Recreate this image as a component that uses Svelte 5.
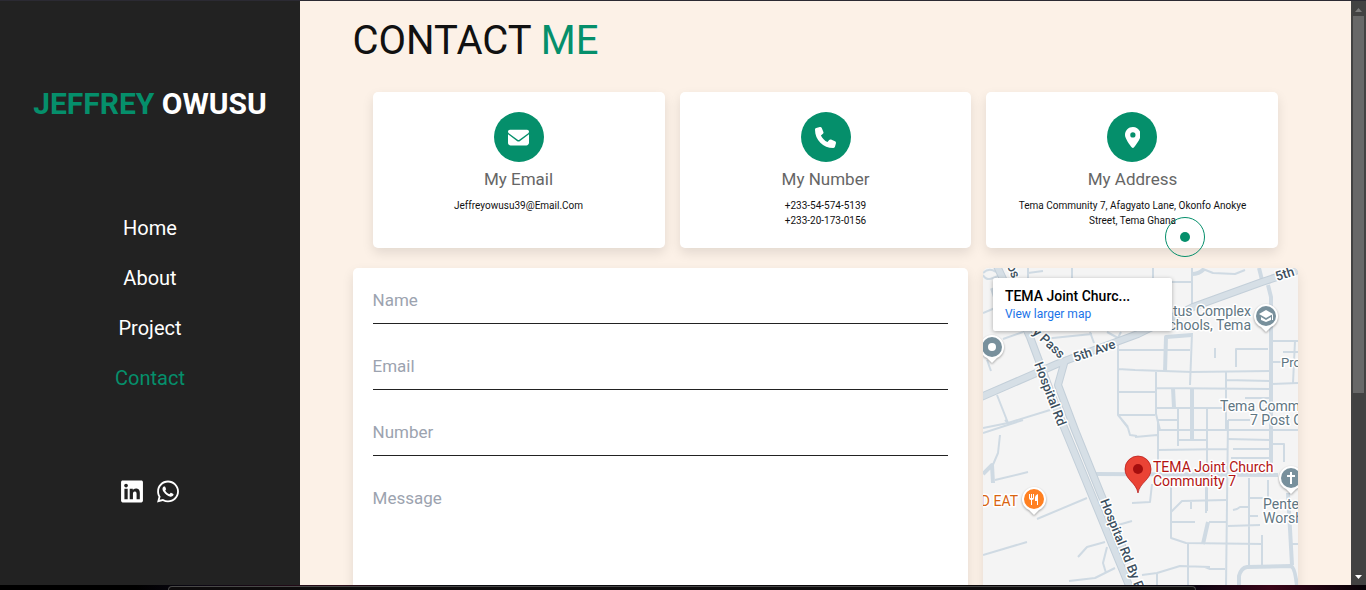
<script lang="ts">
  const links = ["Home", "About", "Project", "Contact"];
  let active = $state("Contact");
  let cursor = $state({ x: 1185, y: 237 });

  const socials = [
    {
      name: "LinkedIn",
      path: "M416 32H31.9C14.3 32 0 46.5 0 64.3v383.4C0 465.5 14.3 480 31.9 480H416c17.6 0 32-14.5 32-32.3V64.3c0-17.8-14.4-32.3-32-32.3zM135.4 416H69V202.2h66.5V416zm-33.2-243c-21.3 0-38.5-17.3-38.5-38.5S80.9 96 102.2 96c21.2 0 38.5 17.3 38.5 38.5 0 21.3-17.2 38.5-38.5 38.5zm282.1 243h-66.4V312c0-24.8-.5-56.7-34.5-56.7-34.6 0-39.9 27-39.9 54.9V416h-66.4V202.2h63.7v29.2h.9c8.9-16.8 30.6-34.5 62.9-34.5 67.2 0 79.7 44.3 79.7 101.9V416z",
    },
    {
      name: "WhatsApp",
      path: "M380.9 97.1C339 55.1 283.2 32 223.9 32c-122.4 0-222 99.6-222 222 0 39.1 10.2 77.3 29.6 111L0 480l117.7-30.9c32.4 17.7 68.9 27 106.1 27h.1c122.3 0 224.1-99.6 224.1-222 0-59.3-25.2-115-67.1-157zm-157 341.6c-33.2 0-65.7-8.9-94-25.7l-6.7-4-69.8 18.3L72 359.2l-4.4-7c-18.5-29.4-28.2-63.3-28.2-98.2 0-101.7 82.8-184.5 184.6-184.5 49.3 0 95.6 19.2 130.4 54.1 34.8 34.9 56.2 81.2 56.1 130.5 0 101.8-84.9 184.6-186.6 184.6zm101.2-138.2c-5.5-2.8-32.8-16.2-37.9-18-5.1-1.9-8.8-2.8-12.5 2.8-3.7 5.6-14.3 18-17.6 21.8-3.2 3.7-6.5 4.2-12 1.4-32.6-16.3-54-29.1-75.5-66-5.7-9.8 5.7-9.1 16.3-30.3 1.8-3.7.9-6.9-.5-9.7-1.4-2.8-12.5-30.1-17.1-41.2-4.5-10.8-9.1-9.3-12.5-9.5-3.2-.2-6.9-.2-10.6-.2-3.7 0-9.7 1.4-14.8 6.9-5.1 5.6-19.4 19-19.4 46.3 0 27.3 19.9 53.7 22.6 57.4 2.8 3.7 39.1 59.7 94.8 83.8 35.2 15.2 49 16.5 66.6 13.9 10.7-1.6 32.8-13.4 37.4-26.4 4.6-13 4.6-24.1 3.2-26.4-1.3-2.5-5-3.9-10.5-6.6z",
    },
  ];

  const cards = [
    {
      title: "My Email",
      lines: ["Jeffreyowusu39@Email.Com"],
      box: "0 0 512 512",
      path: "M48 64C21.5 64 0 85.5 0 112c0 15.1 7.1 29.3 19.2 38.4L236.8 313.6c11.4 8.5 27 8.5 38.4 0L492.8 150.4c12.1-9.1 19.2-23.3 19.2-38.4c0-26.5-21.5-48-48-48H48zM0 176V384c0 35.3 28.7 64 64 64H448c35.3 0 64-28.7 64-64V176L294.4 339.2c-22.8 17.1-54 17.1-76.8 0L0 176z",
    },
    {
      title: "My Number",
      lines: ["+233-54-574-5139", "+233-20-173-0156"],
      box: "0 0 512 512",
      path: "M164.9 24.6c-7.7-18.6-28-28.5-47.4-23.2l-88 24C12.1 30.2 0 46 0 64C0 311.4 200.6 512 448 512c18 0 33.8-12.1 38.6-29.5l24-88c5.3-19.4-4.6-39.7-23.2-47.4l-96-40c-16.3-6.8-35.2-2.1-46.3 11.6L304.7 368C234.3 334.7 177.3 277.7 144 207.3L193.3 167c13.7-11.2 18.4-30 11.6-46.3l-40-96z",
    },
    {
      title: "My Address",
      lines: ["Tema Community 7, Afagyato Lane, Okonfo Anokye Street, Tema Ghana"],
      box: "0 0 384 512",
      path: "M215.7 499.2C267 435 384 279.4 384 192C384 86 298 0 192 0S0 86 0 192c0 87.4 117 243 168.3 307.2c12.3 15.3 35.1 15.3 47.4 0zM192 128a64 64 0 1 1 0 128 64 64 0 1 1 0-128z",
    },
  ];

  const fields = [
    { id: "name", label: "Name", type: "text" },
    { id: "email", label: "Email", type: "email" },
    { id: "number", label: "Number", type: "tel" },
  ];

  // Side streets
  const streets = [
    "M0 5Q6 -1 13 4M0 7Q3 13 10 10L15 8M0 45L12 40M45 0V12M45 5L60 3M89 0V10",
    "M20 71L40 64M4 92L8 103M60 71L109 66M107 64L111 75M0 160L25 155L67 142M14 127L25 155",
    "M124 64L135 70L138 64M135 70V147L145 159M135 82H207M135 101L152 102L209 104L287 103M135 124H172M135 147H172",
    "M170 0V10M189 14H209M209 0V40M209 65L207 117M220 1L230 5L252 6L262 2",
    "M232 80V90M253 99V81H285M173 104V146L177 162M173 120L287 121M243 104V162M243 112L287 113",
    "M262 130H287M173 140H239M195 140V178M224 140V243M175 152H194M245 152H267",
    "M289 73H315M300 84H315M312 73L310 115M290 94H298M289 116L315 115",
    "M152 169L174 167M175 152V205M175 162H315M195 172H224M175 182L244 181M245 152L243 319",
    "M245 171L287 172M250 181H287M248 190H287M290 176H301V194",
    "M188 219V270L203 275L279 276M188 244L199 233L243 232M208 233V241M223 205V245M188 254H212M226 254H244",
    "M245 258L277 257M266 210V297M267 230H281M285 212V229M250 242L254 241L257 239H265M267 248H275M279 267V297M309 276H315",
    "M159 307L174 305L197 298L227 299M222 299L227 301H242M174 305V340M205 276V340M149 235L167 234L169 216",
    "M0 165L40 152M22 152L26 156M17 167L15 185L9 199M12 212L45 204M54 251L104 230M0 287L44 274",
    "M95 289L104 279L122 274M124 279L120 295L123 305M86 313L112 310L132 300M135 257L149 253M139 152L145 160L147 167L154 168",
  ];

  // Wider local roads
  const lanes = [
    "M9 20L12 29M209 6Q216 6 221 1M276 0L279 12M285 17L288 29V195M182 104L183 69L209 67",
    "M190 120L191 140M209 121V172M113 206L295 207M0 206L9 197L10 215M225 254L220 276M305 225L309 297",
    "M256 340V308Q258 300 264 299L308 298Q313 300 315 330",
  ];

  const highways = [
    "M-2 129L74 96L87 91L155 66L210 39L279 14L318 1",
    "M14 -2L47 69L80 157L147 320L156 342",
    "M82 92L75 117L92 162L117 224L146 295",
  ];

  const markers = [
    { x: 9, y: 79, color: "#78909c", kind: "dot" },
    { x: 283, y: 48, color: "#78909c", kind: "school" },
    { x: 308, y: 210, color: "#78909c", kind: "church" },
    { x: 51, y: 231, color: "#ff8021", kind: "food" },
  ];

  const places = [
    { x: 268, y: 48, text: "tus Complex", anchor: "end" },
    { x: 268, y: 62, text: "chools, Tema", anchor: "end" },
    { x: 237, y: 143, text: "Tema Comm", anchor: "start" },
    { x: 267, y: 157, text: "7 Post O", anchor: "start" },
    { x: 280, y: 241, text: "Pente", anchor: "start" },
    { x: 280, y: 255, text: "Worsh", anchor: "start" },
  ];

  const roadNames = [
    { x: 24, y: -2, turn: 68, text: "os" },
    { x: 49, y: 65, turn: 43, text: "y Pass" },
    { x: 92, y: 94, turn: -19, text: "5th Ave" },
    { x: 294, y: 13, turn: -18, text: "5th" },
    { x: 51, y: 96, turn: 69, text: "Hospital Rd" },
    { x: 117, y: 233, turn: 68, text: "Hospital Rd By P" },
  ];
</script>

<div class="screen">
  <div class="window">
    <aside class="sidebar">
      <div class="logo"><span>JEFFREY</span> OWUSU</div>
      <nav>
        {#each links as link}
          <a href="#{link.toLowerCase()}" class:active={active === link} onclick={() => (active = link)}>{link}</a>
        {/each}
      </nav>
      <div class="socials">
        {#each socials as social}
          <a href="#{social.name.toLowerCase()}" aria-label={social.name}>
            <svg viewBox="0 0 448 512"><path d={social.path} /></svg>
          </a>
        {/each}
      </div>
    </aside>

    <main class="contact">
      <h1>CONTACT <span>ME</span></h1>

      <div class="cards">
        {#each cards as card}
          <div class="card">
            <div class="icon">
              <svg viewBox={card.box}><path d={card.path} /></svg>
            </div>
            <h2>{card.title}</h2>
            {#each card.lines as line}
              <p>{line}</p>
            {/each}
          </div>
        {/each}
      </div>

      <div class="row">
        <form>
          {#each fields as field}
            <input id={field.id} type={field.type} placeholder={field.label} aria-label={field.label} />
          {/each}
          <textarea id="message" placeholder="Message" aria-label="Message"></textarea>
        </form>

        <div class="map">
          <svg class="canvas">
            <g class="street">
              {#each streets as d}<path {d} />{/each}
            </g>
            <g class="lane">
              {#each lanes as d}<path {d} />{/each}
            </g>
            <g class="casing">
              {#each highways as d}<path {d} />{/each}
            </g>
            <g class="highway">
              {#each highways as d}<path {d} />{/each}
            </g>

            {#each roadNames as road}
              <text class="road" transform="translate({road.x} {road.y}) rotate({road.turn})">{road.text}</text>
            {/each}

            {#each places as place}
              <text class="place" x={place.x} y={place.y} text-anchor={place.anchor}>{place.text}</text>
            {/each}
            <text class="place small" x="298" y="99">Pro</text>
            <text class="place food" x="35" y="238" text-anchor="end">D EAT</text>

            {#each markers as m}
              <g class="marker" transform="translate({m.x} {m.y})">
                <path d="M0 16L-5 11A12 12 0 1 1 5 11Z" fill="#fff" />
                <circle r="10" fill={m.color} />
                {#if m.kind === "dot"}
                  <circle r="4" fill="#fff" />
                {:else if m.kind === "school"}
                  <path d="M0 -6L-7 -2L0 2L7 -2ZM-5 1V4L0 6L5 4V1L0 4ZM6 -2H7V4H6Z" fill="#fff" />
                {:else if m.kind === "church"}
                  <path d="M-1 -6H1V-3H4V-1H1V6H-1V-1H-4V-3H-1Z" fill="#fff" />
                {:else}
                  <path d="M-5 -5V-1Q-5 1 -3 1V6H-2V1Q0 1 0 -1V-5H-1V-1H-2V-5H-3V-1H-4V-5ZM4 -5Q1 -4 1 -1V2H3V6H4Z" fill="#fff" />
                {/if}
              </g>
            {/each}

            <path
              d="M155 225C153 214 142 212 142 201A13 13 0 0 1 168 201C168 212 157 214 155 225Z"
              fill="#ea4335"
              stroke="#b31412"
              stroke-width="0.7"
            />
            <circle cx="155" cy="201" r="5" fill="#a50e0e" />
            <text class="place pin" x="170" y="204">TEMA Joint Church</text>
            <text class="place pin" x="170" y="218">Community 7</text>
          </svg>

          <div class="info">
            <strong>TEMA Joint Churc...</strong>
            <a href="#map">View larger map</a>
          </div>
        </div>
      </div>
    </main>

    <div class="scrollbar" aria-hidden="true">
      <svg viewBox="0 0 15 15"><path d="M4 11H11L7.5 7Z" fill="#7c7c7c" /></svg>
      <div class="thumb"></div>
      <svg viewBox="0 0 15 15"><path d="M4 5H11L7.5 9Z" fill="#fff" /></svg>
    </div>
  </div>

  <div class="dock"><div class="edge"></div></div>

  <div class="cursor" style="left:{cursor.x}px; top:{cursor.y}px;"></div>
</div>

<style>
  :global(body) {
    margin: 0;
    overflow: hidden;
  }

  .screen {
    --green: #058f6b;
    position: relative;
    display: grid;
    grid-template-rows: minmax(0, 1fr) 5px;
    height: 100vh;
    font-family: Roboto, "Liberation Sans", sans-serif;
    color: #111;
  }

  .screen * {
    box-sizing: border-box;
  }

  .window {
    display: grid;
    grid-template-columns: 300px minmax(0, 1fr) 15px;
    min-height: 0;
    border-top: 1px solid #2b2a33;
    background: #fcf1e7;
  }

  .sidebar {
    display: flex;
    flex-direction: column;
    align-items: center;
    justify-content: space-between;
    padding: 80px 0 81px;
    background: #222;
    color: #fff;
  }

  .logo {
    font-size: 30px;
    line-height: 46px;
    font-weight: 700;
  }

  .logo span,
  h1 span {
    color: var(--green);
  }

  nav {
    display: flex;
    flex-direction: column;
    align-items: center;
  }

  nav a {
    font-size: 20px;
    line-height: 50px;
    color: #fff;
    text-decoration: none;
  }

  nav a.active {
    color: var(--green);
  }

  .socials {
    display: flex;
    gap: 14px;
  }

  .socials svg {
    display: block;
    width: 22px;
    height: 25px;
    fill: #fff;
  }

  .contact {
    min-width: 0;
    padding: 10px 5% 0;
    overflow: hidden;
  }

  h1 {
    margin: 0 0 1px;
    font-size: 40px;
    line-height: 60px;
    font-weight: 400;
  }

  .cards {
    display: grid;
    grid-template-columns: repeat(3, 1fr);
    gap: 15px;
    padding: 20px;
  }

  .card,
  form,
  .map {
    border-radius: 5px;
    background: #fff;
    box-shadow: 0 5px 12px rgba(0, 0, 0, 0.1);
  }

  .card {
    display: flex;
    flex-direction: column;
    align-items: center;
    padding: 20px;
    text-align: center;
  }

  .icon {
    display: grid;
    place-items: center;
    width: 50px;
    height: 50px;
    border-radius: 50%;
    background: var(--green);
  }

  .icon svg {
    display: block;
    height: 21px;
    fill: #fff;
  }

  h2 {
    margin: 4px 0 6px;
    font-size: 17px;
    line-height: 26px;
    font-weight: 400;
    color: #666;
  }

  p {
    margin: 0;
    font-size: 10px;
    line-height: 15px;
  }

  .row {
    display: grid;
    grid-template-columns: 39fr 20fr;
    gap: 15px;
  }

  form {
    display: flex;
    flex-direction: column;
    gap: 30px;
    padding: 20px;
  }

  input,
  textarea {
    width: 100%;
    padding: 0 0 12px;
    border: 0;
    border-bottom: 1px solid #222;
    outline: none;
    background: none;
    font: 17px/24px Roboto, "Liberation Sans", sans-serif;
    color: #111;
    resize: none;
  }

  input {
    height: 36px;
  }

  textarea {
    height: 150px;
  }

  input::placeholder,
  textarea::placeholder {
    color: #9ca3af;
  }

  .map {
    position: relative;
    min-width: 0;
    overflow: hidden;
    background: #f4f4f4;
  }

  .canvas {
    display: block;
    width: 100%;
    height: 100%;
  }

  .canvas g path {
    stroke-linejoin: round;
  }

  .street,
  .lane,
  .casing,
  .highway {
    fill: none;
    stroke: #cfdae3;
    stroke-width: 2;
  }

  .lane {
    stroke-width: 4;
  }

  .casing {
    stroke: #c3cfd9;
    stroke-width: 8;
  }

  .highway {
    stroke: #d6dfe6;
    stroke-width: 6;
  }

  .canvas text {
    paint-order: stroke;
    stroke: #fff;
    stroke-width: 3px;
    stroke-linejoin: round;
  }

  .road {
    font-size: 13px;
    font-weight: 500;
    fill: #3c4f5e;
  }

  .place {
    font-size: 14px;
    fill: #5f7682;
  }

  .small {
    font-size: 13px;
  }

  .food {
    fill: #d9640f;
  }

  .pin {
    fill: #b31412;
  }

  .marker {
    filter: drop-shadow(0 1px 1px rgba(0, 0, 0, 0.35));
  }

  .info {
    position: absolute;
    top: 10px;
    left: 10px;
    display: flex;
    flex-direction: column;
    width: 179px;
    height: 53px;
    padding: 9px 12px;
    border-radius: 2px;
    background: #fff;
    box-shadow: 0 1px 4px rgba(0, 0, 0, 0.3);
  }

  .info strong {
    font-size: 14px;
    line-height: 18px;
    font-weight: 500;
    color: #000;
  }

  .info a {
    font-size: 12px;
    line-height: 18px;
    color: #1a73e8;
    text-decoration: none;
  }

  .scrollbar {
    display: grid;
    grid-template-rows: 15px minmax(0, 1fr) 15px;
    background: #424242;
  }

  .scrollbar svg {
    display: block;
    width: 15px;
    height: 15px;
  }

  .thumb {
    height: 68%;
    margin: 0 2px;
    background: #686868;
  }

  .dock {
    padding: 1px 170px 0 168px;
    background: linear-gradient(90deg, #000 10%, #0a0712 14%, #2c0c18 25%, #0a0a0f 32%, #0b0606 70%, #08040f 87%, #3a0518 93%, #060207);
  }

  .edge {
    height: 4px;
    border: 1px solid #484848;
    border-bottom: 0;
    border-radius: 4px 4px 0 0;
    background: #0e0c0d;
  }

  .cursor {
    position: absolute;
    display: grid;
    place-items: center;
    width: 40px;
    height: 40px;
    border: 1px solid var(--green);
    border-radius: 50%;
    transform: translate(-50%, -50%);
    pointer-events: none;
  }

  .cursor::after {
    content: "";
    width: 10px;
    height: 10px;
    border-radius: 50%;
    background: var(--green);
  }
</style>
